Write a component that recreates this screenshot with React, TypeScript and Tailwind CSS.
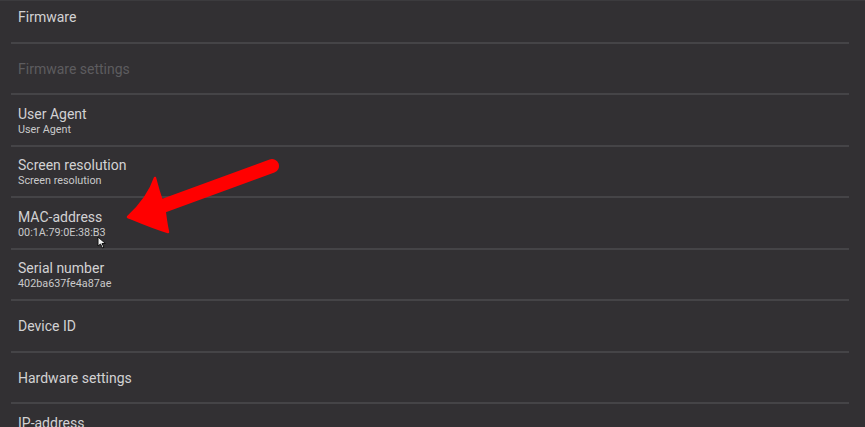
const rows: { title: string; sub?: string; disabled?: boolean }[] = [
  { title: "Firmware" },
  { title: "Firmware settings", disabled: true },
  { title: "User Agent", sub: "User Agent" },
  { title: "Screen resolution", sub: "Screen resolution" },
  { title: "MAC-address", sub: "00:1A:79:0E:38:B3" },
  { title: "Serial number", sub: "402ba637fe4a87ae" },
  { title: "Device ID" },
  { title: "Hardware settings" },
  { title: "IP-address", sub: "192.168.1.104" },
];

function Row({ title, sub, disabled }: { title: string; sub?: string; disabled?: boolean }) {
  return (
    <div className="flex h-[49.5px] flex-col justify-center pl-[7px] pt-[2px]">
      <div
        className={
          disabled
            ? "text-[14px] leading-[17px] text-[#5d5c5f]"
            : "text-[14px] leading-[17px] text-[#d2d2d3]"
        }
      >
        {title}
      </div>
      {sub && <div className="text-[10.8px] leading-[13px] text-[#c9c9ca]">{sub}</div>}
    </div>
  );
}

function RedArrow() {
  return (
    <svg className="pointer-events-none absolute left-0 top-0" width="865" height="427" viewBox="0 0 865 427">
      <path d="M272 165 L160 206" stroke="#ff0000" strokeWidth="14" strokeLinecap="round" fill="none" />
      <path
        d="M128 216 C140 205 150 192 155 177 C158 188 160 197 164 204 C165 214 166 222 168 231 C154 227 140 221 128 216 Z"
        fill="#ff0000"
        stroke="#ff0000"
        strokeWidth="2.5"
        strokeLinejoin="round"
      />
    </svg>
  );
}

function Cursor() {
  return (
    <svg className="pointer-events-none absolute left-[97px] top-[235px]" width="11" height="13" viewBox="0 0 11 13">
      <path d="M1 1 L1 10 L3.5 8 L5.5 12 L7 11.3 L5 7.5 L8.5 7.5 Z" fill="#f2f2f2" stroke="#111" strokeWidth="1" strokeLinejoin="round" />
    </svg>
  );
}

export default function App() {
  return (
    <div
      className="relative h-[427px] w-[865px] overflow-hidden border-t border-[#3c3b3e] bg-[#323033]"
      style={{ fontFamily: "Roboto, 'Noto Sans', sans-serif" }}
    >
      <div className="-mt-[9px] ml-[11px] w-[838px]">
        {rows.map((r) => (
          <div key={r.title}>
            <Row {...r} />
            <div className="h-[2px] bg-[#454447]" />
          </div>
        ))}
      </div>
      <RedArrow />
      <Cursor />
    </div>
  );
}
